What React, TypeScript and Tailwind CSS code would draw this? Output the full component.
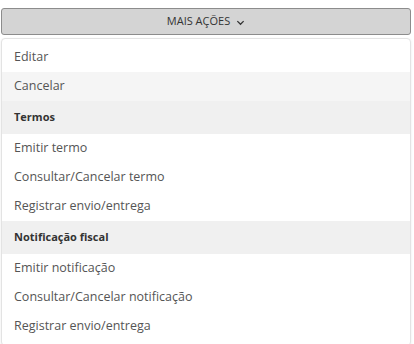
import React from 'react';

type Entry = { label: string; header?: boolean; hover?: boolean };

const entries: Entry[] = [
  { label: 'Editar' },
  { label: 'Cancelar', hover: true },
  { label: 'Termos', header: true },
  { label: 'Emitir termo' },
  { label: 'Consultar/Cancelar termo' },
  { label: 'Registrar envio/entrega' },
  { label: 'Notificação fiscal', header: true },
  { label: 'Emitir notificação' },
  { label: 'Consultar/Cancelar notificação' },
  { label: 'Registrar envio/entrega' },
];

export default function App() {
  return (
    <div className="w-[414px] h-[344px] bg-white overflow-hidden font-['Open_Sans',sans-serif]">
      <div className="pt-2 pl-px">
        <button className="w-[410px] h-[27px] flex items-center justify-center gap-1.5 bg-[#d4d4d4] border border-[#8c8c8c] rounded-[3px] text-[11px] text-[#333] uppercase">
          Mais ações
          <svg width="9" height="9" viewBox="0 0 10 10" className="mt-px">
            <polyline points="1.5,3.5 5,7 8.5,3.5" fill="none" stroke="#333" strokeWidth="1.4" />
          </svg>
        </button>
        <ul className="mt-[3px] w-[410px] bg-white border border-[#e3e3e3] rounded-[4px] shadow-[0_1px_3px_rgba(0,0,0,0.08)] py-1">
          {entries.map((e, i) =>
            e.header ? (
              <li key={i} className="h-[33px] flex items-center px-3 bg-[#f0f0f0] text-[11px] font-bold text-[#333]">
                {e.label}
              </li>
            ) : (
              <li
                key={i}
                className={`h-[29px] flex items-center px-3 text-[12.5px] text-[#555] ${e.hover ? 'bg-[#f5f5f5]' : ''}`}
              >
                {e.label}
              </li>
            )
          )}
        </ul>
      </div>
    </div>
  );
}
